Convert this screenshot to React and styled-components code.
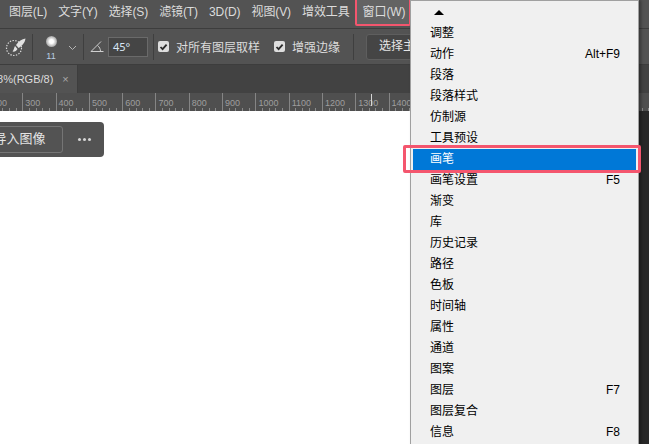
import React from 'react';
import styled, { createGlobalStyle } from 'styled-components';

const FONT = '"Liberation Sans", "Noto Sans CJK SC", sans-serif';

const GlobalStyle = createGlobalStyle`
  html, body {
    margin: 0;
    padding: 0;
    background: #282828;
  }
  body {
    font-family: ${FONT};
    font-size: 12px;
    overflow: hidden;
  }
`;

const Page = styled.div`
  position: relative;
  width: 649px;
  height: 444px;
  display: flex;
  flex-direction: column;
  overflow: hidden;
`;

const MenuBar = styled.div`
  height: 28px;
  flex: none;
  display: flex;
  align-items: center;
  gap: 11px;
  padding-left: 9px;
  background: #535353;
  border-bottom: 1px solid #3d3d3d;
  color: #dcdcdc;
`;

const MenuLabel = styled.div`
  position: relative;
  line-height: 24px;
  margin-top: -4px;
  white-space: nowrap;
  letter-spacing: -0.1px;
`;

const ActiveMenuLabel = styled(MenuLabel)`
  margin-left: 2px;
  &::before {
    content: '';
    position: absolute;
    left: -8px;
    right: -6px;
    top: -2px;
    bottom: -2px;
    box-sizing: border-box;
    border: 2px solid #f4566e;
    border-radius: 2px;
    background: #636363;
    z-index: 0;
  }
  span {
    position: relative;
  }
`;

const OptionsBar = styled.div`
  height: 35px;
  flex: none;
  display: flex;
  align-items: center;
  background: #535353;
  border-bottom: 1px solid #3d3d3d;
  color: #dcdcdc;
  white-space: nowrap;
`;

const Divider = styled.div`
  width: 1px;
  height: 26px;
  flex: none;
  background: #3f3f3f;
  margin: ${(p) => p.$margin};
`;

const BrushPreview = styled.div`
  width: 24px;
  flex: none;
  display: flex;
  flex-direction: column;
  align-items: center;
  margin-left: 6px;
  margin-top: 4px;
`;

const BrushDot = styled.div`
  width: 11px;
  height: 11px;
  border-radius: 50%;
  background: radial-gradient(circle, #ffffff 25%, #a5a5a5 70%, #5a5a5a 100%);
`;

const BrushSize = styled.div`
  font-size: 9px;
  line-height: 12px;
  margin-top: 3px;
  color: #b9cfe4;
`;

const AngleInput = styled.div`
  width: 40px;
  height: 20px;
  box-sizing: border-box;
  flex: none;
  margin-left: 4px;
  padding-left: 4px;
  border: 1px solid #6a6a6a;
  background: #454545;
  color: #d8e6f5;
  font-size: 11px;
  line-height: 18px;
  font-family: "Noto Sans", sans-serif;
`;

const CheckLabel = styled.div`
  display: flex;
  align-items: center;
  gap: 7px;
  margin-left: ${(p) => p.$left}px;
`;

const CheckBox = styled.div`
  width: 11px;
  height: 11px;
  border-radius: 2px;
  background: #dedede;
  display: flex;
  align-items: center;
  justify-content: center;
`;

const SelectButton = styled.div`
  flex: none;
  width: 70px;
  height: 24px;
  margin-left: 12px;
  padding-left: 12px;
  background: #454545;
  border: 1px solid #5e5e5e;
  border-radius: 3px;
  line-height: 22px;
  color: #e6e6e6;
`;

const TabStrip = styled.div`
  height: 28px;
  flex: none;
  display: flex;
  background: #424242;
`;

const Tab = styled.div`
  width: 78px;
  box-sizing: border-box;
  display: flex;
  align-items: center;
  overflow: hidden;
  background: #535353;
  border-right: 1px solid #3d3d3d;
  color: #dcdcdc;
  white-space: nowrap;
`;

const TabTitle = styled.span`
  margin-left: -9px;
  font-size: 11px;
`;

const TabClose = styled.span`
  margin-left: 9px;
  font-size: 11px;
  color: #a8a8a8;
`;

const Ruler = styled.div`
  position: relative;
  height: 18px;
  flex: none;
  display: flex;
  margin-left: -11px;
  overflow: hidden;
  background:
    repeating-linear-gradient(to right, #8a8a8a 0 1px, transparent 1px 6.66px) 0 100% / 100% 3px no-repeat,
    #4f4f4f;
`;

const RulerMark = styled.div`
  width: 33.3px;
  height: 100%;
  flex: none;
  box-sizing: border-box;
  padding-left: 2px;
  border-left: 1px solid #858585;
  color: #9e9e9e;
  font-size: 9px;
  line-height: 20px;
`;

const RulerCursor = styled.div`
  position: absolute;
  left: 382px;
  top: 1px;
  width: 1px;
  height: 12px;
  background: #d5d5d5;
`;

const Workspace = styled.div`
  flex: 1;
  display: flex;
  background: #282828;
`;

const Canvas = styled.div`
  width: 500px;
  flex: none;
  background: #ffffff;
  padding-top: 11px;
`;

const FloatBar = styled.div`
  width: 104px;
  height: 35px;
  display: flex;
  align-items: center;
  overflow: hidden;
  background: #535353;
  border-radius: 0 4px 4px 0;
  color: #e4e4e4;
`;

const FloatButton = styled.div`
  width: 75px;
  height: 27px;
  flex: none;
  box-sizing: border-box;
  margin-left: -12px;
  padding-right: 12px;
  border: 1px solid #757575;
  border-radius: 3px;
  text-align: center;
  line-height: 24px;
  font-size: 13px;
  white-space: nowrap;
`;

const MoreDots = styled.div`
  flex: none;
  margin-left: 15px;
  display: flex;
  gap: 2px;
`;

const Dot = styled.i`
  width: 3px;
  height: 3px;
  border-radius: 50%;
  background: #d6d6d6;
`;

const Dropdown = styled.div`
  position: absolute;
  left: 410px;
  top: 0;
  width: 229px;
  height: 450px;
  box-sizing: border-box;
  padding: 1px 2px 0;
  background: #f0f0f0;
  border: 1px solid #a0a0a0;
  color: #000;
  box-shadow: 2px 0 3px rgba(0, 0, 0, 0.35);
`;

const ScrollUp = styled.div`
  height: 21px;
  display: flex;
  align-items: center;
  padding-left: 21px;
`;

const Arrow = styled.div`
  width: 0;
  height: 0;
  border-left: 5.5px solid transparent;
  border-right: 5.5px solid transparent;
  border-bottom: 5px solid #000;
`;

const Item = styled.div`
  position: relative;
  height: 21px;
  box-sizing: border-box;
  display: flex;
  align-items: center;
  justify-content: space-between;
  padding: 0 16px 1px 17px;
  line-height: 20px;
  ${(p) =>
    p.$selected &&
    `
    background: #0078d7;
    color: #fff;
    &::after {
      content: '';
      position: absolute;
      left: -10px;
      right: -5px;
      top: -4px;
      bottom: -3px;
      border: 3px solid #f4566e;
      border-radius: 2px;
    }
  `}
`;

const menus = ['图层(L)', '文字(Y)', '选择(S)', '滤镜(T)', '3D(D)', '视图(V)', '增效工具'];
const marks = [200, 300, 400, 500, 600, 700, 800, 900, 1000, 1100, 1200, 1300, 1400, 1500, 1600, 1700, 1800, 1900, 2000];
const items = [
  ['调整'],
  ['动作', 'Alt+F9'],
  ['段落'],
  ['段落样式'],
  ['仿制源'],
  ['工具预设'],
  ['画笔', '', true],
  ['画笔设置', 'F5'],
  ['渐变'],
  ['库'],
  ['历史记录'],
  ['路径'],
  ['色板'],
  ['时间轴'],
  ['属性'],
  ['通道'],
  ['图案'],
  ['图层', 'F7'],
  ['图层复合'],
  ['信息', 'F8'],
];

function BrushIcon() {
  return (
    <svg width="22" height="20" viewBox="0 0 22 20" style={{ marginLeft: 5, flex: 'none' }}>
      <circle cx="9" cy="11" r="7.5" fill="none" stroke="#dcdcdc" strokeWidth="1.2" strokeDasharray="1.4 1.4" />
      <path d="M20.5 1.5 C17 1.8 13.5 4.5 11 8 L13.5 11 C17 9 20 5.5 20.5 1.5 Z" fill="#e2e2e2" />
      <path d="M10 9 L12.5 12 C11.5 14 9.5 15 7.5 14.5 C9 13.2 8.8 10.8 10 9 Z" fill="#e2e2e2" />
    </svg>
  );
}

function AngleIcon() {
  return (
    <svg width="14" height="13" viewBox="0 0 14 13" style={{ marginLeft: 6, flex: 'none' }}>
      <path d="M1 11.5 H13.5 M1 11.5 L11 1.5 M7.5 5.5 C9.5 7 10.5 9 10.5 11.5" fill="none" stroke="#cfcfcf" strokeWidth="1" />
    </svg>
  );
}

function Chevron() {
  return (
    <svg width="9" height="6" viewBox="0 0 9 6" style={{ marginLeft: 5, marginTop: 2, flex: 'none' }}>
      <path d="M1 1 L4.5 4.5 L8 1" fill="none" stroke="#b5b5b5" strokeWidth="1" />
    </svg>
  );
}

function Tick() {
  return (
    <svg width="9" height="8" viewBox="0 0 9 8">
      <path d="M1.5 4 L3.6 6.2 L7.6 1.6" fill="none" stroke="#2b2b2b" strokeWidth="1.8" />
    </svg>
  );
}

export default function App() {
  return (
    <Page>
      <GlobalStyle />
      <MenuBar>
        {menus.map((m) => (
          <MenuLabel key={m}>{m}</MenuLabel>
        ))}
        <ActiveMenuLabel>
          <span>窗口(W)</span>
        </ActiveMenuLabel>
      </MenuBar>

      <OptionsBar>
        <BrushIcon />
        <Divider $margin="0 0 0 5px" />
        <BrushPreview>
          <BrushDot />
          <BrushSize>11</BrushSize>
        </BrushPreview>
        <Chevron />
        <Divider $margin="0 0 0 6px" />
        <AngleIcon />
        <AngleInput>45°</AngleInput>
        <Divider $margin="0 0 0 5px" />
        <CheckLabel $left={4}>
          <CheckBox>
            <Tick />
          </CheckBox>
          对所有图层取样
        </CheckLabel>
        <CheckLabel $left={14}>
          <CheckBox>
            <Tick />
          </CheckBox>
          增强边缘
        </CheckLabel>
        <Divider $margin="0 0 0 13px" />
        <SelectButton>选择主体</SelectButton>
      </OptionsBar>

      <TabStrip>
        <Tab>
          <TabTitle>48%(RGB/8)</TabTitle>
          <TabClose>×</TabClose>
        </Tab>
      </TabStrip>

      <Ruler>
        {marks.map((m) => (
          <RulerMark key={m}>{m}</RulerMark>
        ))}
        <RulerCursor />
      </Ruler>

      <Workspace>
        <Canvas>
          <FloatBar>
            <FloatButton>导入图像</FloatButton>
            <MoreDots>
              <Dot />
              <Dot />
              <Dot />
            </MoreDots>
          </FloatBar>
        </Canvas>
      </Workspace>

      <Dropdown>
        <ScrollUp>
          <Arrow />
        </ScrollUp>
        {items.map(([label, shortcut, selected]) => (
          <Item key={label} $selected={selected}>
            <span>{label}</span>
            {shortcut && <span>{shortcut}</span>}
          </Item>
        ))}
      </Dropdown>
    </Page>
  );
}
